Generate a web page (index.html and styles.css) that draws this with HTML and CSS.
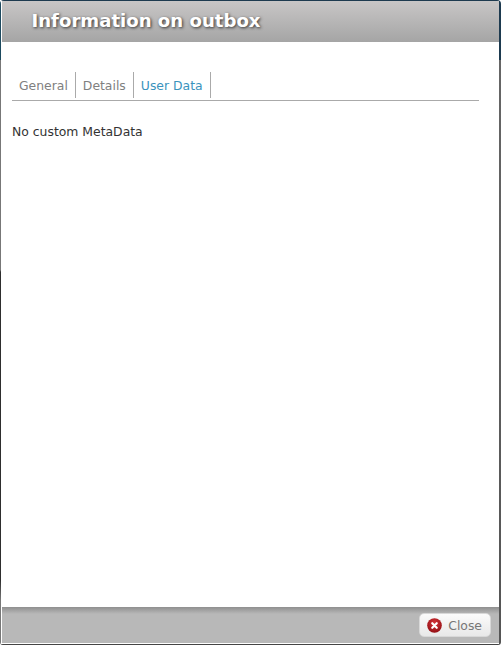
FILE: index.html
```html
<!DOCTYPE html>
<html lang="en">
<head>
    <meta charset="UTF-8">
    <meta name="viewport" content="width=device-width, initial-scale=1.0">
    <title>Information on outbox</title>
    <link rel="stylesheet" href="styles.css">
</head>
<body>
    <div class="dialog">
        <div class="titlebar">Information on outbox</div>
        <div class="content">
            <ul class="tabs">
                <li class="tab">General</li>
                <li class="tab">Details</li>
                <li class="tab active">User Data</li>
            </ul>
            <p class="message">No custom MetaData</p>
        </div>
        <div class="footer">
            <button class="close-btn" type="button">
                <svg class="close-icon" width="15" height="15" viewBox="0 0 16 16">
                    <defs>
                        <radialGradient id="red" cx="50%" cy="35%" r="65%">
                            <stop offset="0" stop-color="#d8343a"/>
                            <stop offset="1" stop-color="#930f14"/>
                        </radialGradient>
                    </defs>
                    <circle cx="8" cy="8" r="7.8" fill="url(#red)"/>
                    <path d="M5.6 5.6l4.8 4.8M10.4 5.6l-4.8 4.8" stroke="#fff" stroke-width="2.3" stroke-linecap="round"/>
                </svg>
                Close
            </button>
        </div>
    </div>
</body>
</html>
```

FILE: styles.css
```css
html, body { margin: 0; padding: 0; height: 100%; }
body { background: #fff; font-family: "DejaVu Sans", Verdana, sans-serif; font-size: 12.4px; color: #333; overflow: hidden; }

/* the window edge changes colour on the way down, so the sides are two thin gradients */
.dialog {
    box-sizing: border-box;
    height: 645px;
    display: flex;
    flex-direction: column;
    padding: 1px 2px 2px 2px;
    border-radius: 4px 4px 3px 3px;
    background-color: #fff;
    background-image:
        linear-gradient(#1d3a4f, #1d3a4f),
        linear-gradient(#444, #444),
        linear-gradient(#1d4a5f 60px, #777 60px, #777 270px, #2e2e2e 272px, #2e2e2e 580px, #777 600px),
        linear-gradient(#1d3a4f 60px, #666 60px, #555 100%);
    background-size: 100% 1px, 100% 1px, 1px 100%, 2px 100%;
    background-position: 0 0, 0 100%, 0 0, 100% 0;
    background-repeat: no-repeat;
}

.titlebar {
    height: 41px;
    padding-left: 29.5px;
    line-height: 39px;
    font-size: 18.1px;
    font-weight: bold;
    color: #fff;
    text-shadow: 1px 1px 3px #333;
    background: linear-gradient(#c8c6c6, #a5a5a5);
}

.content { flex: 1; padding: 30px 20px 0 10px; }

.tabs {
    display: flex;
    list-style: none;
    margin: 0;
    padding: 0;
    height: 28px;
    border-bottom: 1px solid #aaa;
}
.tab {
    padding: 0 7px;
    line-height: 27px;
    height: 26px;
    color: #808080;
    border-right: 1px solid #aaa;
}
.tab.active { color: #3a93bd; }

.message { margin: 24px 0 0; line-height: 14px; color: #333; }

.footer {
    height: 36px;
    display: flex;
    justify-content: flex-end;
    align-items: center;
    padding-right: 8px;
    background: linear-gradient(#8f8f8f, #b8b8b8 7px);
}

.close-btn {
    display: flex;
    align-items: center;
    gap: 6px;
    height: 24px;
    padding: 0 8px 0 7px;
    border: 1px solid #d8d8d8;
    border-radius: 5px;
    background: linear-gradient(#fbfbfb, #e8e8e8);
    font-family: inherit;
    font-size: 12.4px;
    color: #777;
}
.close-icon { display: block; }
```
